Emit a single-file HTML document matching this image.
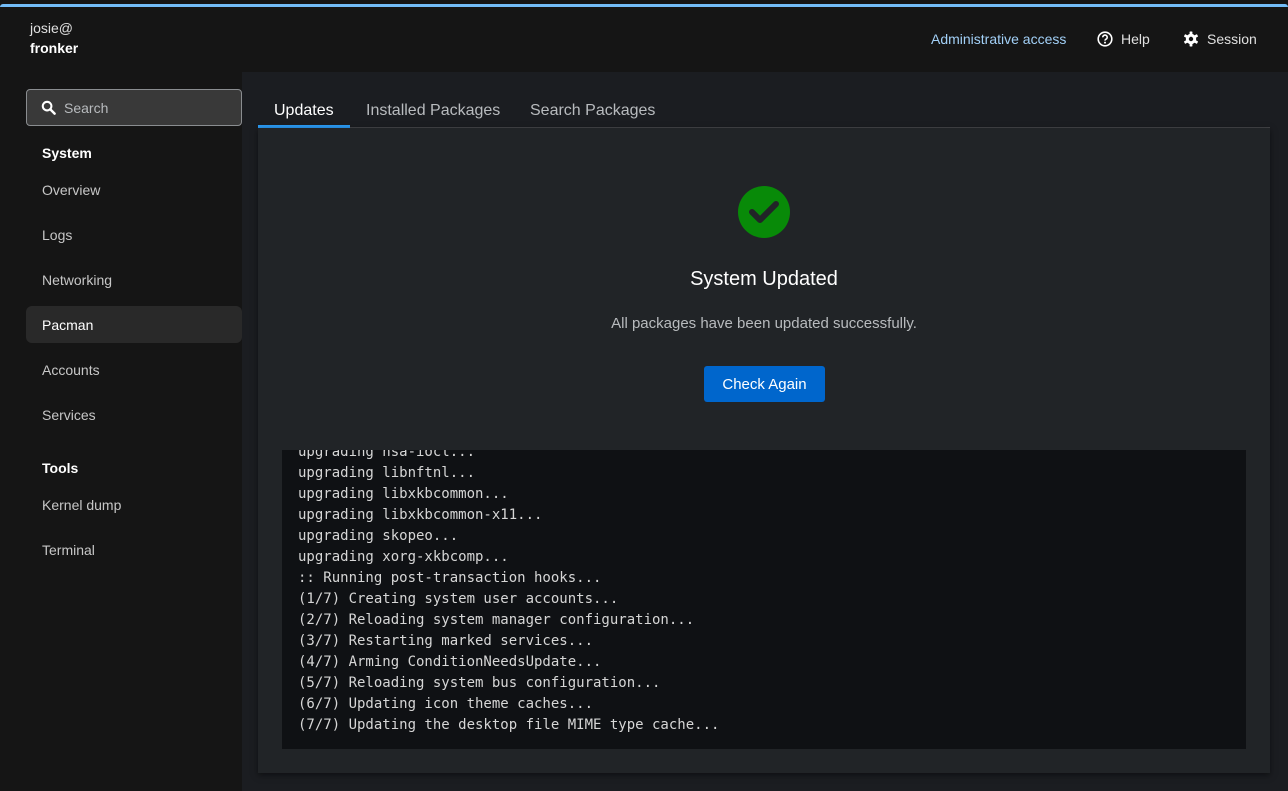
<!DOCTYPE html>
<html><head><style>
*{box-sizing:border-box;margin:0;padding:0}
body{width:1288px;height:791px;background:#151515;font-family:"Liberation Sans",sans-serif;color:#e0e0e0;position:relative;overflow:hidden}
.topline{position:absolute;left:0;top:4px;width:1288px;height:3px;background:#73bcf7;border-radius:3px 3px 0 0}
.user{position:absolute;left:30px;top:18px;font-size:14px;line-height:20px}
.user b{display:block;color:#fff;font-size:14px}
.hdr{position:absolute;top:31px;font-size:14px;color:#e0e0e0;display:flex;align-items:center;gap:8px}
.search{position:absolute;left:26px;top:89px;width:216px;height:37px;background:#393939;border:1px solid #8a8d90;border-radius:4px;font-size:14px;color:#b8bbbe;padding:10px 0 0 37px}
.nav{position:absolute;left:42px;font-size:14px;color:#c7c7c7}
.nav.h{color:#fff;font-weight:bold}
.sel{position:absolute;left:26px;top:306px;width:216px;height:37px;background:#292929;border-radius:6px}
.main{position:absolute;left:242px;top:72px;width:1046px;height:719px;background:#1b1d21}
.tab{position:absolute;top:102px;font-size:16px;color:#b8bbbe}
.tabline{position:absolute;left:258px;top:127px;width:1012px;height:1px;background:#444548}
.card{position:absolute;left:258px;top:128px;width:1012px;height:645px;background:#212427;box-shadow:0 2px 6px rgba(0,0,0,.5)}
.term{position:absolute;left:282px;top:450px;width:964px;height:299px;background:#0f1114;overflow:hidden;font-family:"DejaVu Sans Mono","Liberation Mono",monospace;font-size:14px;line-height:21px;color:#d6d6d6;padding-left:16px;white-space:pre}
</style></head><body>
<div class="topline"></div>
<div class="user">josie@<b>fronker</b></div>
<div class="hdr" style="left:931px;color:#a2d0f7">Administrative access</div>
<div class="hdr" style="left:1097px"><svg width="16" height="16" viewBox="0 0 16 16"><circle cx="8" cy="8" r="6.8" fill="none" stroke="#fff" stroke-width="1.6"/><path d="M5.8 6.3a2.2 2.2 0 1 1 3 2c-.6.3-.8.6-.8 1.3" fill="none" stroke="#fff" stroke-width="1.6"/><circle cx="8" cy="11.6" r="1" fill="#fff"/></svg>Help</div>
<div class="hdr" style="left:1183px"><svg width="16" height="16" viewBox="0 0 16 16"><g fill="#fff"><circle cx="8" cy="8" r="5.2"/><rect x="6.6" y="0.5" width="2.8" height="15" rx=".6"/><rect x="6.6" y="0.5" width="2.8" height="15" rx=".6" transform="rotate(60 8 8)"/><rect x="6.6" y="0.5" width="2.8" height="15" rx=".6" transform="rotate(120 8 8)"/></g><circle cx="8" cy="8" r="2.2" fill="#151515"/></svg>Session</div>
<div class="search"><svg style="position:absolute;left:14px;top:10px" width="15" height="15" viewBox="0 0 16 16"><circle cx="6.5" cy="6.5" r="4.6" fill="none" stroke="#fff" stroke-width="2.2"/><path d="M10 10l4.5 4.5" stroke="#fff" stroke-width="2.6" stroke-linecap="round"/></svg>Search</div>
<div class="nav h" style="top:145px">System</div>
<div class="nav" style="top:182px">Overview</div>
<div class="nav" style="top:227px">Logs</div>
<div class="nav" style="top:272px">Networking</div>
<div class="sel"></div>
<div class="nav" style="top:317px;color:#fff">Pacman</div>
<div class="nav" style="top:362px">Accounts</div>
<div class="nav" style="top:407px">Services</div>
<div class="nav h" style="top:460px">Tools</div>
<div class="nav" style="top:497px">Kernel dump</div>
<div class="nav" style="top:542px">Terminal</div>
<div class="main"></div>
<div class="tabline"></div>
<div class="tab" style="left:274px;color:#fff">Updates</div>
<div style="position:absolute;left:258px;top:125px;width:92px;height:3px;background:#2b9af3"></div>
<div class="tab" style="left:366px">Installed Packages</div>
<div class="tab" style="left:530px">Search Packages</div>
<div class="card"></div>
<svg style="position:absolute;left:738px;top:186px" width="52" height="52" viewBox="0 0 52 52"><circle cx="26" cy="26" r="26" fill="#088a08"/><path d="M14 26l8 8 16-16" fill="none" stroke="#212427" stroke-width="6" stroke-linecap="round" stroke-linejoin="round"/></svg>
<div style="position:absolute;left:258px;width:1012px;top:268px;text-align:center;font-size:20px;color:#fff">System Updated</div>
<div style="position:absolute;left:258px;width:1012px;top:315px;text-align:center;font-size:15px;color:#b8bbbe">All packages have been updated successfully.</div>
<div style="position:absolute;left:704px;top:366px;width:121px;height:36px;background:#0066cc;border-radius:3px;color:#fff;font-size:15px;text-align:center;line-height:38px">Check Again</div>
<div class="term"><div style="margin-top:-8px">upgrading nsa-iocl...
upgrading libnftnl...
upgrading libxkbcommon...
upgrading libxkbcommon-x11...
upgrading skopeo...
upgrading xorg-xkbcomp...
:: Running post-transaction hooks...
(1/7) Creating system user accounts...
(2/7) Reloading system manager configuration...
(3/7) Restarting marked services...
(4/7) Arming ConditionNeedsUpdate...
(5/7) Reloading system bus configuration...
(6/7) Updating icon theme caches...
(7/7) Updating the desktop file MIME type cache...</div></div>
</body></html>
